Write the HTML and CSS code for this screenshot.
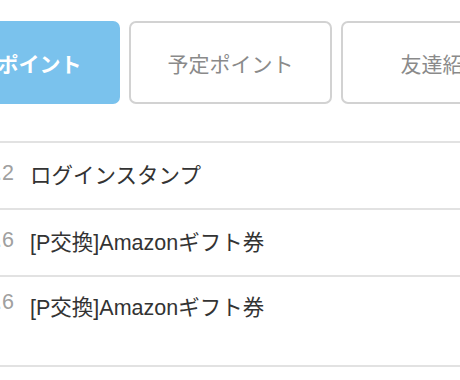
FILE: index.html
```html
<!DOCTYPE html>
<html lang="ja">

<head>
  <meta charset="UTF-8" />
  <meta name="viewport" content="width=device-width, initial-scale=1" />
  <title>ポイント履歴</title>
  <link rel="stylesheet" href="styles.css">
</head>

<body>
  <div class="page">
    <div class="tabs">
      <div class="tab active">獲得ポイント</div>
      <div class="tab">予定ポイント</div>
      <div class="tab">友達紹介</div>
    </div>

    <ul class="history">
      <li class="row">
        <span class="date">2020.1.2</span>
        <span class="title">ログインスタンプ</span>
      </li>
      <li class="row">
        <span class="date">2020.1.6</span>
        <span class="title">[P交換]Amazonギフト券</span>
      </li>
      <li class="row last">
        <span class="date">2019.12.6</span>
        <span class="title">[P交換]Amazonギフト券</span>
      </li>
    </ul>
  </div>
</body>

</html>
```

FILE: styles.css
```css
html,
body {
  margin: 0;
  padding: 0;
  background-color: #fff;
  font-family: "Liberation Sans", "Noto Sans CJK JP", sans-serif;
  overflow: hidden;
}

.page {
  width: 460px;
  overflow: hidden;
}

.tabs {
  display: flex;
  gap: 9px;
  margin: 21px 0 0 -83px;
  width: 640px;
}

.tab {
  flex: 0 0 203px;
  height: 83px;
  box-sizing: border-box;
  border: 2px solid #d2d2d2;
  border-radius: 7px;
  display: flex;
  align-items: center;
  justify-content: center;
  font-size: 21px;
  color: #8a8a8a;
}

.tab.active {
  background-color: #7ac2ed;
  border-color: #7ac2ed;
  color: #fff;
  font-weight: bold;
}

.history {
  list-style: none;
  margin: 37px 0 0;
  padding: 0;
  border-top: 2px solid #e2e2e2;
}

.row {
  display: flex;
  align-items: center;
  gap: 16px;
  height: 61px;
  padding-bottom: 4px;
  border-bottom: 2px solid #e2e2e2;
  font-size: 21.5px;
}

.row.last {
  align-items: flex-start;
  padding: 13px 0 0;
  height: 75px;
}

.date {
  flex: 0 0 100px;
  margin-left: -86px;
  text-align: right;
  color: #a0a0a0;
}

.title {
  color: #333;
}
```
